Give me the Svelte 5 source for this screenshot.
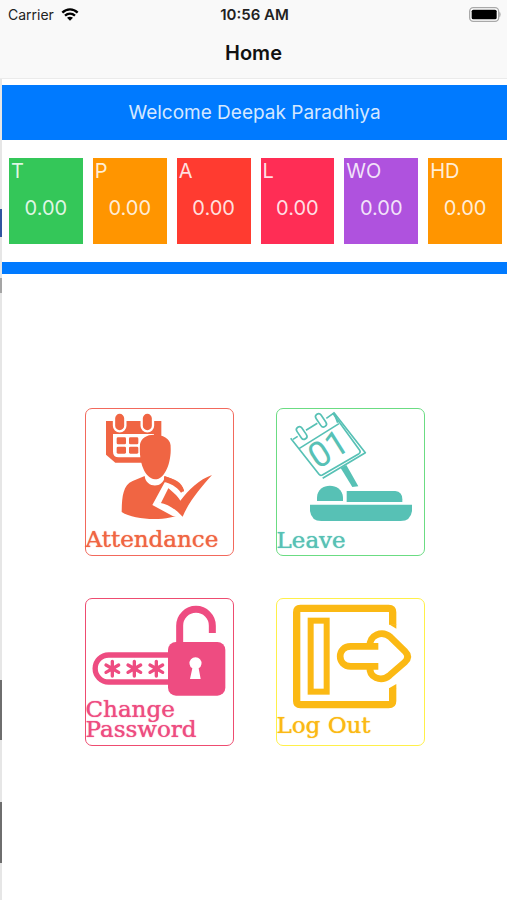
<script lang="ts">
  type Stat = { label: string; value: number; color: string };

  const user = "Deepak Paradhiya";

  const stats: Stat[] = [
    { label: "T", value: 0, color: "green" },
    { label: "P", value: 0, color: "orange" },
    { label: "A", value: 0, color: "red" },
    { label: "L", value: 0, color: "pink" },
    { label: "WO", value: 0, color: "purple" },
    { label: "HD", value: 0, color: "orange" },
  ];

  const stars = [97, 163, 229];
</script>

<div class="app">
  <header>
    <div class="status">
      <div class="carrier">
        <span>Carrier</span>
        <svg width="18" height="13" viewBox="0 0 54 39" aria-hidden="true">
          <path d="M4 14C17 1 37 1 50 14" fill="none" stroke="#000" stroke-width="7" />
          <path d="M12 23C21 15 33 15 42 23" fill="none" stroke="#000" stroke-width="7" />
          <path d="M18 29C23 25 31 25 36 29L27 38Z" />
        </svg>
      </div>
      <span class="time">10:56 AM</span>
      <svg class="battery" width="32" height="15" viewBox="0 0 96 45" aria-hidden="true">
        <rect x="2" y="2" width="87" height="41" rx="11" fill="#fff" stroke="#a9a9a9" stroke-width="4" />
        <rect x="8" y="8" width="75" height="29" rx="5" />
        <path d="M92 16q4 6 0 13z" fill="#a9a9a9" stroke="#a9a9a9" stroke-width="2" />
      </svg>
    </div>
    <h1>Home</h1>
  </header>

  <main>
    <section class="summary">
      <p class="welcome">Welcome {user}</p>
      <div class="stats">
        {#each stats as stat}
          <div class="stat {stat.color}">
            <span>{stat.label}</span>
            <span class="value">{stat.value.toFixed(2)}</span>
          </div>
        {/each}
      </div>
      <div class="divider"></div>
    </section>

    <nav>
      <button type="button" class="tile attendance">
        <svg viewBox="18 27 441 438" aria-hidden="true">
          <path d="M78 63H244V120L230 188H106L78 164Z" fill="currentColor" />
          <path d="M99 102H222V172H116Q99 172 99 155Z" fill="#fff" />
          <g fill="currentColor">
            <rect x="110" y="112" width="28" height="21" rx="4" />
            <rect x="147" y="112" width="28" height="21" rx="4" />
            <rect x="110" y="140" width="28" height="21" rx="4" />
            <rect x="147" y="140" width="28" height="21" rx="4" />
          </g>
          <g fill="currentColor" stroke="#fff" stroke-width="7">
            <rect x="102" y="38" width="34" height="56" rx="17" />
            <rect x="185" y="38" width="34" height="56" rx="17" />
          </g>
          <path
            d="M158 243L194 228C198 266 252 266 254 228C280 238 305 248 312 272L308 340C265 365 165 362 125 336C126 292 128 256 158 243Z"
            fill="currentColor"
          />
          <path
            d="M180 133C184 111 207 101 232 105C257 107 274 122 272 143C274 185 256 238 225 238C195 236 176 188 180 133Z"
            fill="currentColor"
          />
          <path d="M259 238L217 315L278 348L308 354L398 224L314 278Z" fill="#fff" />
          <path
            d="M239 308C250 289 258 270 265 262C278 270 292 288 301 302C325 270 358 238 396 225C365 260 328 302 308 350C285 326 264 312 239 308Z"
            fill="currentColor"
          />
          <path d="M252 229C285 237 306 247 312 272L303 278C288 258 270 250 252 246Z" fill="currentColor" />
          <path d="M239 308L264 258L302 292L314 276" fill="none" stroke="#fff" stroke-width="8" />
        </svg>
        <span class="label">Attendance</span>
      </button>

      <button type="button" class="tile leave">
        <svg viewBox="21 27 441 438" aria-hidden="true">
          <path d="M212 204L229 195L265 259L247 261Z" fill="currentColor" />
          <g fill="none" stroke="currentColor" stroke-width="5" stroke-linejoin="round">
            <path d="M62 115L147 223Q151 228 157 225L267 161Q273 157 269 151L188 39" fill="#fff" />
            <path d="M158 235L286 158L192 38L203 68" />
            <path d="M69 118L83 109M108 91L142 70M169 55L190 40M87 146L207 71" />
            <rect x="-9" y="-21" width="18" height="42" rx="9" transform="translate(95 99) rotate(-34)" fill="#fff" />
            <rect x="-9" y="-22" width="18" height="44" rx="9" transform="translate(153 61) rotate(-34)" fill="#fff" />
          </g>
          <text x="0" y="0" transform="translate(143 209) rotate(-32)">01</text>
          <path d="M141 303V292C143 246 216 246 219 292V303Z" fill="currentColor" />
          <path d="M230 273H376Q397 275 397 298V306H230Z" fill="currentColor" />
          <path d="M120 314H426V333Q422 363 392 363H154Q124 363 120 333Z" fill="currentColor" />
        </svg>
        <span class="label">Leave</span>
      </button>

      <button type="button" class="tile password">
        <svg viewBox="18 21 441 438" aria-hidden="true">
          <path
            d="M299 155V101A49 49 0 0 1 397 101V123"
            fill="none"
            stroke="currentColor"
            stroke-width="21"
          />
          <path d="M266 189H86A40 40 0 0 0 86 270H266" fill="none" stroke="currentColor" stroke-width="16" />
          <rect x="264" y="150" width="172" height="161" rx="24" fill="currentColor" />
          <path d="M337 229A18 18 0 1 1 356 229L362 261H330Z" fill="#fff" />
          <g stroke="currentColor" stroke-width="10" stroke-linecap="round">
            {#each stars as x}
              <path d="M{x} 208V252M{x - 19} 219L{x + 19} 241M{x + 19} 219L{x - 19} 241" />
            {/each}
          </g>
        </svg>
        <span class="label">Change Password</span>
      </button>

      <button type="button" class="tile logout">
        <svg viewBox="21 21 441 438" aria-hidden="true">
          <g fill="none" stroke="currentColor">
            <path
              d="M368 98V61Q368 49 356 49H91Q80 49 80 61V327Q80 338 91 338H356Q368 338 368 327V288"
              stroke-width="22"
            />
            <rect x="122" y="86" width="48" height="213" stroke-width="18" />
            <path
              d="M325 163H242C200 163 200 223 242 223H325M300 163C296 130 336 113 362 136L405 178Q421 194 405 210L359 250C332 272 296 256 300 223"
              stroke-width="20"
              stroke-linejoin="round"
            />
          </g>
          <path d="M357 97H379V110ZM357 289H379V276Z" fill="currentColor" />
        </svg>
        <span class="label">Log Out</span>
      </button>
    </nav>
  </main>
</div>

<style>
  :global(body) {
    margin: 0;
    background: #fff;
  }

  .app {
    display: flex;
    flex-direction: column;
    min-height: 100vh;
    font-family: Inter, "Liberation Sans", sans-serif;
  }

  header {
    background: #f9f9f9;
    border-bottom: 1px solid #ebebeb;
  }

  .status {
    display: grid;
    grid-template-columns: 1fr auto 1fr;
    align-items: center;
    height: 28px;
    padding: 0 6px 0 8px;
    font-size: 14px;
    color: #222;
  }

  .carrier {
    display: flex;
    align-items: center;
    gap: 7px;
  }

  .time {
    font-size: 15px;
    font-weight: 600;
  }

  .battery {
    justify-self: end;
  }

  h1 {
    margin: 0;
    font-size: 20px;
    font-weight: 600;
    line-height: 50px;
    text-align: center;
    color: #111;
  }

  main {
    flex: 1;
    display: flex;
    flex-direction: column;
    padding-left: 2px;
    background: linear-gradient(
      #e6e6e6 130px,
      #3056a0 130px 158px,
      #e6e6e6 158px 199px,
      #a5a5a5 199px 214px,
      #e6e6e6 214px 601px,
      #6e6e6e 601px 661px,
      #e6e6e6 661px 723px,
      #6e6e6e 723px 784px,
      #e6e6e6 784px
    );
  }

  .summary {
    padding-top: 6px;
    background: #fff;
  }

  .welcome {
    margin: 0;
    line-height: 56px;
    height: 55px;
    font-size: 19px;
    text-align: center;
    color: #d5e8ff;
    background: #007aff;
  }

  .stats {
    display: grid;
    grid-template-columns: repeat(6, 1fr);
    gap: 10px;
    padding: 18px 5px 18px 7px;
  }

  .stat {
    display: flex;
    flex-direction: column;
    height: 86px;
    font-size: 20px;
    line-height: 26px;
    color: rgba(255, 255, 255, 0.85);
    text-indent: 2px;
  }

  .value {
    padding-top: 11px;
    text-align: center;
    text-indent: 0;
  }

  .green {
    background: #34c759;
  }

  .orange {
    background: #ff9500;
  }

  .red {
    background: #ff3b30;
  }

  .pink {
    background: #ff2d55;
  }

  .purple {
    background: #af52de;
  }

  .divider {
    height: 12px;
    background: #007aff;
  }

  nav {
    flex: 1;
    display: grid;
    grid-template-columns: 149px 149px;
    grid-auto-rows: 148px;
    gap: 42px;
    justify-content: center;
    align-content: start;
    padding: 134px 0 40px;
    background: #fff;
  }

  .tile {
    display: grid;
    padding: 0;
    border: 1px solid;
    border-radius: 7px;
    background: #fff;
    text-align: left;
    cursor: pointer;
  }

  .tile svg,
  .label {
    grid-area: 1 / 1;
  }

  .tile svg {
    width: 100%;
    height: 100%;
  }

  .label {
    align-self: end;
    font-family: "DejaVu Serif", serif;
    font-size: 23px;
    line-height: 20px;
    padding-bottom: 6px;
    text-shadow: 0 0 1px currentColor;
  }

  text {
    font-family: Roboto, sans-serif;
    font-size: 106px;
    fill: currentColor;
  }

  .attendance {
    color: #f06543;
    border-color: #f2695c;
  }

  .leave {
    color: #57c1b5;
    border-color: #6bdc83;
  }

  .password {
    color: #ee4c81;
    border-color: #ee4c70;
  }

  .logout {
    color: #fbb914;
    border-color: #fff04a;
  }

  .leave .label {
    padding-bottom: 5px;
  }

  .logout .label {
    padding-bottom: 10px;
  }
</style>
